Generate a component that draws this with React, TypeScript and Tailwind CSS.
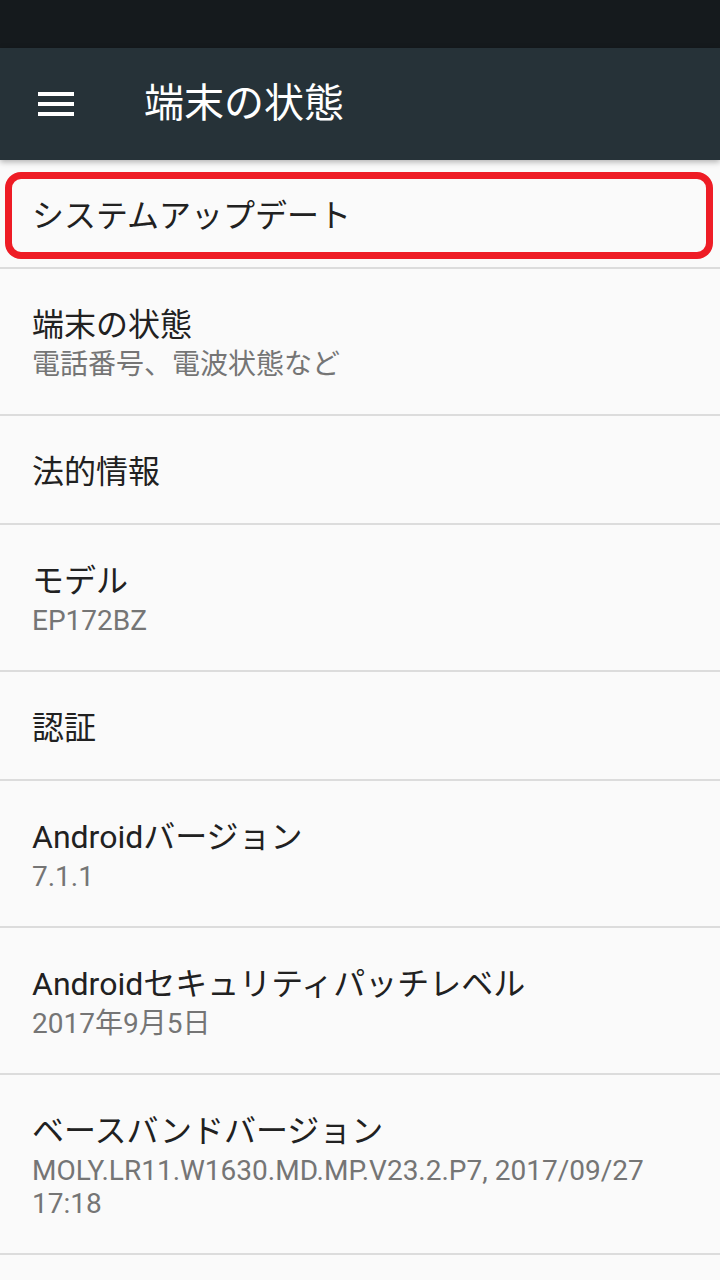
import React from 'react';

type Item = { title: string; sub?: string[] };

const items: Item[] = [
  { title: 'システムアップデート' },
  { title: '端末の状態', sub: ['電話番号、電波状態など'] },
  { title: '法的情報' },
  { title: 'モデル', sub: ['EP172BZ'] },
  { title: '認証' },
  { title: 'Androidバージョン', sub: ['7.1.1'] },
  { title: 'Androidセキュリティパッチレベル', sub: ['2017年9月5日'] },
  { title: 'ベースバンドバージョン', sub: ['MOLY.LR11.W1630.MD.MP.V23.2.P7, 2017/09/27', '17:18'] },
];

export default function App() {
  return (
    <div
      className="w-[720px] h-[1280px] overflow-hidden bg-[#fafafa]"
      style={{ fontFamily: 'Roboto, "Noto Sans CJK JP", sans-serif' }}
    >
      {/* status bar */}
      <div className="h-[48px] bg-[#151a1d]" />

      {/* toolbar */}
      <div className="relative z-10 h-[112px] bg-[#263238] flex items-center shadow-[0_2px_6px_rgba(0,0,0,0.3)]">
        <div className="w-[144px] pl-[38px] flex flex-col gap-[6px]">
          <div className="w-[36px] h-[4px] bg-white" />
          <div className="w-[36px] h-[4px] bg-white" />
          <div className="w-[36px] h-[4px] bg-white" />
        </div>
        <div className="text-[40px] leading-none text-white">端末の状態</div>
      </div>

      {/* list */}
      <div>
        {items.map((it, i) => (
          <div
            key={i}
            className={
              'relative border-b-2 border-[#dcdcdc] px-[32px] pt-[35px] ' +
              (it.sub ? 'pb-[33px]' : 'pb-[30px]')
            }
          >
            <div className="text-[32px] leading-[42px] text-[#212121] whitespace-nowrap">{it.title}</div>
            {it.sub && (
              <div className="mt-[2px]">
                {it.sub.map((s, j) => (
                  <div key={j} className="text-[28px] leading-[33px] text-[#757575] whitespace-nowrap">
                    {s}
                  </div>
                ))}
              </div>
            )}
            {i === 0 && (
              <div className="absolute left-[5px] right-[7px] top-[12px] h-[87px] rounded-[16px] border-[7px] border-[#ee1c25]" />
            )}
          </div>
        ))}
      </div>
    </div>
  );
}
